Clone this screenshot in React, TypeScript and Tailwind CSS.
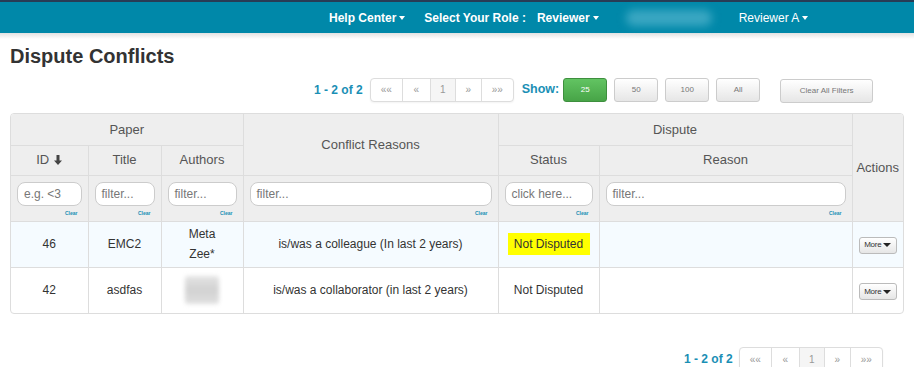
import React from "react";

const Caret = () => (
  <span className="ml-[3px] inline-block h-0 w-0 border-x-[3px] border-t-[4px] border-x-transparent border-t-white align-middle" />
);

const Pager = () => (
  <div className="flex h-[24px] rounded-[4px] border border-[#ddd] bg-white text-[10px] text-[#999] shadow-[0_1px_2px_rgba(0,0,0,0.05)]">
    <div className="flex w-[32px] items-center justify-center border-r border-[#ddd]">««</div>
    <div className="flex w-[28px] items-center justify-center border-r border-[#ddd]">«</div>
    <div className="flex w-[25px] items-center justify-center border-r border-[#ddd] bg-[#f5f5f5]">1</div>
    <div className="flex w-[26px] items-center justify-center border-r border-[#ddd]">»</div>
    <div className="flex w-[31px] items-center justify-center">»»</div>
  </div>
);

const SizeButton = ({ label, active, wide }: { label: string; active?: boolean; wide?: boolean }) => (
  <button
    className={
      "h-[24px] rounded-[3px] border text-[8px] " +
      (wide ? "w-[93px] " : "w-[44px] ") +
      (active
        ? "border-[#3e8f3e] bg-gradient-to-b from-[#62c462] to-[#47a447] text-white"
        : "border-[#ccc] bg-gradient-to-b from-white to-[#e6e6e6] text-[#777]")
    }
  >
    {label}
  </button>
);

const FilterCell = ({ placeholder }: { placeholder: string }) => (
  <td className="border border-[#ddd] px-[6px] align-top">
    <div className="mt-[6px] flex h-[24px] items-center rounded-[8px] border border-[#ccc] bg-white px-[6px] text-[12px] text-[#777]">
      {placeholder}
    </div>
    <div className="mt-[3px] pr-[4px] text-right text-[5px] font-bold leading-[8px] text-[#1a8fb5]">Clear</div>
  </td>
);

const MoreButton = () => (
  <button className="inline-flex h-[17px] w-[38px] items-center justify-center rounded-[3px] border border-[#bbb] bg-gradient-to-b from-white to-[#e6e6e6] text-[8px] tracking-[-0.3px] text-[#333]">
    More
    <span className="ml-[2px] inline-block h-0 w-0 border-x-[4px] border-t-[4px] border-x-transparent border-t-[#222]" />
  </button>
);

const SortDown = () => (
  <svg width="8" height="10" viewBox="0 0 8 10" className="ml-[5px] inline-block align-[-1px]">
    <path d="M2.5 0h3v5.5H8L4 10 0 5.5h2.5z" fill="#444" />
  </svg>
);

const cell = "border border-[#ddd] text-center";
const head = "border border-[#ddd] text-center font-normal";

export default function App() {
  return (
    <div className="min-h-[367px] bg-white font-['Liberation_Sans',Arial,sans-serif] text-[#333]">
      <nav className="flex h-[33px] items-center border-t-2 border-[#283c55] bg-[#0088a9] text-[12px] text-white">
        <div className="ml-[329px] flex items-center font-bold">
          Help Center
          <Caret />
        </div>
        <div className="ml-[19px] font-bold">Select Your Role :</div>
        <div className="ml-[11px] flex items-center font-bold">
          Reviewer
          <Caret />
        </div>
        <div className="ml-[27px] h-[16px] w-[86px] rounded-full bg-[#3aa7c2] blur-[4px]" />
        <div className="ml-[27px] flex items-center">
          Reviewer A
          <Caret />
        </div>
      </nav>
      <div className="h-[6px] bg-gradient-to-b from-[#e2e2e2] to-white" />

      <div className="px-[10px]">
        <h1 className="mt-[5px] text-[20px] font-bold leading-[24px] text-[#333]">Dispute Conflicts</h1>

        <div className="mt-[8px] flex items-center">
          <div className="ml-[304px] text-[12px] font-bold text-[#1a8fb5]">1 - 2 of 2</div>
          <div className="ml-[7px]">
            <Pager />
          </div>
          <div className="ml-[8px] text-[12.5px] font-bold text-[#1a8fb5]">Show:</div>
          <div className="ml-[4px] flex gap-[7px]">
            <SizeButton label="25" active />
            <SizeButton label="50" />
            <SizeButton label="100" />
            <SizeButton label="All" />
          </div>
          <div className="ml-[20px]">
            <SizeButton label="Clear All Filters" wide />
          </div>
        </div>

        <div className="mt-[10px] overflow-hidden rounded-[4px] border border-[#ddd]">
          <table className="w-full table-fixed border-collapse border-hidden text-[12px]">
            <colgroup>
              <col className="w-[77px]" />
              <col className="w-[73px]" />
              <col className="w-[82px]" />
              <col className="w-[255px]" />
              <col className="w-[101px]" />
              <col className="w-[253px]" />
              <col className="w-[51px]" />
            </colgroup>
            <thead className="bg-[#eee] text-[13px] text-[#555]">
              <tr className="h-[31px]">
                <th colSpan={3} className={head}>Paper</th>
                <th rowSpan={2} className={head}>Conflict Reasons</th>
                <th colSpan={2} className={head}>Dispute</th>
                <th rowSpan={3} className={head}>Actions</th>
              </tr>
              <tr className="h-[30px]">
                <th className={head}>
                  ID
                  <SortDown />
                </th>
                <th className={head}>Title</th>
                <th className={head}>Authors</th>
                <th className={head}>Status</th>
                <th className={head}>Reason</th>
              </tr>
              <tr className="h-[46px] text-left">
                <FilterCell placeholder="e.g. <3" />
                <FilterCell placeholder="filter..." />
                <FilterCell placeholder="filter..." />
                <FilterCell placeholder="filter..." />
                <FilterCell placeholder="click here..." />
                <FilterCell placeholder="filter..." />
              </tr>
            </thead>
            <tbody>
              <tr className="h-[46px] bg-[#f5fbff]">
                <td className={cell}>46</td>
                <td className={cell}>EMC2</td>
                <td className={cell + " leading-[20px]"}>
                  Meta
                  <br />
                  Zee*
                </td>
                <td className={cell}>is/was a colleague (In last 2 years)</td>
                <td className={cell}>
                  <span className="inline-block w-[82px] bg-[#ffff00] py-[2px]">Not Disputed</span>
                </td>
                <td className={cell}></td>
                <td className={cell}>
                  <MoreButton />
                </td>
              </tr>
              <tr className="h-[46px]">
                <td className={cell}>42</td>
                <td className={cell}>asdfas</td>
                <td className={cell}>
                  <div className="mx-auto h-[28px] w-[34px] rounded-[3px] bg-gradient-to-b from-[#e4e4e4] via-[#d2d2d2] to-[#e0e0e0] blur-[2px]" />
                </td>
                <td className={cell}>is/was a collaborator (in last 2 years)</td>
                <td className={cell}>Not Disputed</td>
                <td className={cell}></td>
                <td className={cell}>
                  <MoreButton />
                </td>
              </tr>
            </tbody>
          </table>
        </div>

        <div className="mt-[33px] flex items-center">
          <div className="ml-[674px] text-[12px] font-bold text-[#1a8fb5]">1 - 2 of 2</div>
          <div className="ml-[6px]">
            <Pager />
          </div>
        </div>
      </div>
    </div>
  );
}
